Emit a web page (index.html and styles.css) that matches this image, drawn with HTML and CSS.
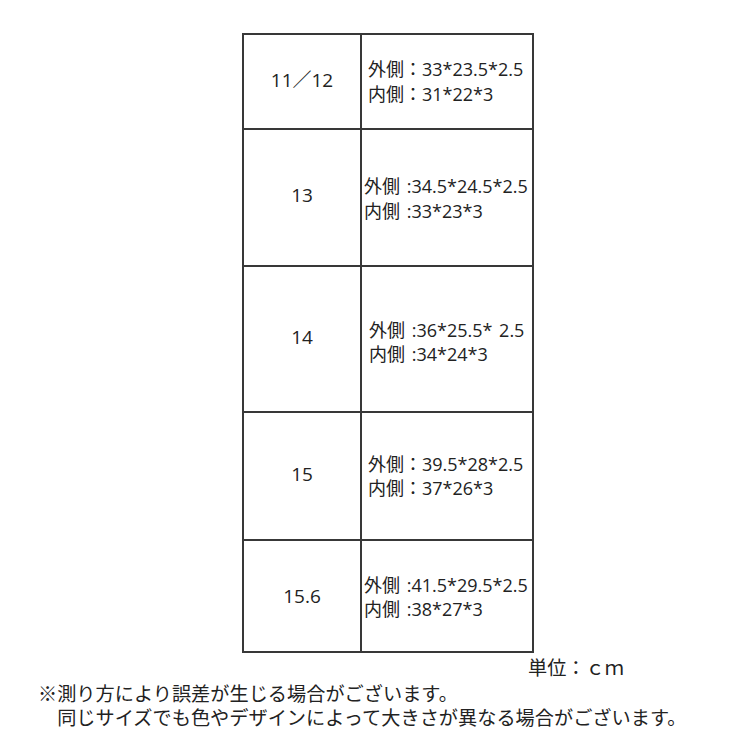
FILE: index.html
```html
<!DOCTYPE html>
<html lang="ja">
<head>
<meta charset="utf-8">
<title>サイズ表</title>
<link rel="stylesheet" href="styles.css">
</head>
<body>
<div class="page">
  <div class="size-table">
    <div class="cell label row1">11／12</div>
    <div class="cell spec row1 pad-a"><div>外側：33*23.5*2.5<br>内側：31*22*3</div></div>

    <div class="cell label row2">13</div>
    <div class="cell spec row2 pad-b spaced"><div>外側 :34.5*24.5*2.5<br>内側 :33*23*3</div></div>

    <div class="cell label row3">14</div>
    <div class="cell spec row3 pad-c spaced"><div>外側 :36*25.5* 2.5<br>内側 :34*24*3</div></div>

    <div class="cell label row4">15</div>
    <div class="cell spec row4 pad-a"><div>外側：39.5*28*2.5<br>内側：37*26*3</div></div>

    <div class="cell label row5">15.6</div>
    <div class="cell spec row5 pad-b spaced"><div>外側 :41.5*29.5*2.5<br>内側 :38*27*3</div></div>
  </div>
  <div class="unit">単位：ｃｍ</div>
  <div class="notes">
    <p>※測り方により誤差が生じる場合がございます。</p>
    <p>　同じサイズでも色やデザインによって大きさが異なる場合がございます。</p>
  </div>
</div>
</body>
</html>
```

FILE: styles.css
```css
html, body {
  margin: 0;
  padding: 0;
  background: #ffffff;
}

.page {
  width: 740px;
  height: 740px;
  padding-top: 33px;
  box-sizing: border-box;
  color: #222222;
  font-family: "Open Sans", "Noto Sans CJK JP", sans-serif;
}

.size-table {
  display: grid;
  grid-template-columns: 118px 172px;
  grid-template-rows: 95px 137px 146px 128px 112px;
  width: 290px;
  margin-left: 242px;
  border-top: 2px solid #383838;
  border-left: 2px solid #383838;
}

.cell {
  box-sizing: border-box;
  border-right: 2px solid #383838;
  border-bottom: 2px solid #383838;
  display: flex;
  align-items: center;
}

.label {
  justify-content: center;
  font-size: 19px;
  padding-bottom: 5px;
}

.row5.label {
  padding-bottom: 0;
}

.spec {
  font-size: 18px;
  line-height: 24.5px;
  white-space: nowrap;
  padding-top: 2px;
}

.spec.row1 { padding-top: 0; }
.spec.row3 { padding-top: 6px; }
.spec.row4 { padding-top: 0; }

.spaced { word-spacing: 2px; }

.pad-a { padding-left: 6px; }
.pad-b { padding-left: 2px; }
.pad-c { padding-left: 7px; }

.unit {
  margin-left: 528px;
  margin-top: 2px;
  font-family: "Noto Sans CJK JP", sans-serif;
  font-size: 19.2px;
  line-height: 24px;
}

.notes {
  margin-top: 2px;
  padding-left: 38px;
  font-family: "Noto Sans CJK JP", sans-serif;
  font-size: 19.2px;
  line-height: 24px;
}

.notes p {
  margin: 0;
  white-space: nowrap;
}
```
